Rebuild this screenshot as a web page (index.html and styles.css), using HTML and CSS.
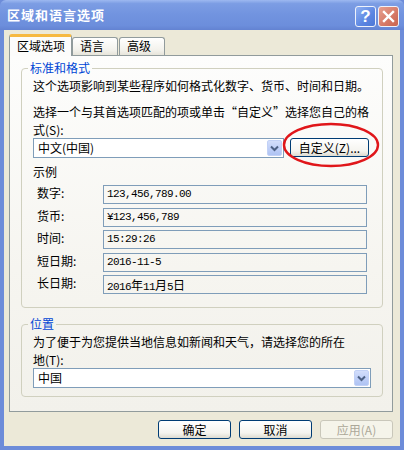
FILE: index.html
```html
<!DOCTYPE html>
<html lang="zh-CN">
<head>
<meta charset="utf-8">
<title>区域和语言选项</title>
<link rel="stylesheet" href="styles.css">
</head>
<body>
<div class="window">
  <div class="titlebar">
    <span class="title">区域和语言选项</span>
    <div class="tb-buttons">
      <span class="tb-btn help">?</span>
      <span class="tb-btn close"><svg width="13" height="13" viewBox="0 0 13 13"><path d="M2 2 L11 11 M11 2 L2 11" stroke="#fff" stroke-width="2.4" stroke-linecap="square"/></svg></span>
    </div>
  </div>
  <div class="client">
    <div class="tabs">
      <div class="tab active">区域选项</div>
      <div class="tab">语言</div>
      <div class="tab t3">高级</div>
    </div>
    <div class="panel">
      <fieldset class="group g1">
        <legend>标准和格式</legend>
        <div class="gbody">
          <p class="line1">这个选项影响到某些程序如何格式化数字、货币、时间和日期。</p>
          <p class="line2">选择一个与其首选项匹配的项或单击“自定义”选择您自己的格<br>式(S):</p>
          <div class="fmt-row">
            <div class="select short">
              <span class="val">中文(中国)</span>
              <span class="arrow"><svg width="9" height="7" viewBox="0 0 9 7"><path d="M1 1.5 L4.5 5 L8 1.5" fill="none" stroke="#4d6185" stroke-width="2"/></svg></span>
            </div>
            <button class="btn custom">自定义(Z)...</button>
          </div>
          <div class="sample-title">示例</div>
          <div class="examples">
            <div class="ex-row"><span class="ex-label">数字:</span><span class="ex-box">123,456,789.00</span></div>
            <div class="ex-row"><span class="ex-label">货币:</span><span class="ex-box">¥123,456,789</span></div>
            <div class="ex-row"><span class="ex-label">时间:</span><span class="ex-box">15:29:26</span></div>
            <div class="ex-row"><span class="ex-label">短日期:</span><span class="ex-box">2016-11-5</span></div>
            <div class="ex-row"><span class="ex-label">长日期:</span><span class="ex-box">2016<span class="cjk">年</span>11<span class="cjk">月</span>5<span class="cjk">日</span></span></div>
          </div>
        </div>
      </fieldset>
      <fieldset class="group g2">
        <legend>位置</legend>
        <div class="gbody">
          <p class="line3">为了便于为您提供当地信息如新闻和天气，请选择您的所在<br>地(T):</p>
          <div class="select full">
            <span class="val">中国</span>
            <span class="arrow"><svg width="9" height="7" viewBox="0 0 9 7"><path d="M1 1.5 L4.5 5 L8 1.5" fill="none" stroke="#4d6185" stroke-width="2"/></svg></span>
          </div>
        </div>
      </fieldset>
    </div>
    <div class="buttons">
      <button class="btn dlg">确定</button>
      <button class="btn dlg">取消</button>
      <button class="btn dlg disabled">应用(A)</button>
    </div>
  </div>
  <svg class="mark" width="100" height="48" viewBox="0 0 100 48"><ellipse cx="49" cy="23" rx="47" ry="21" fill="none" stroke="#e0161a" stroke-width="2.4"/></svg>
</div>
</body>
</html>
```
FILE: styles.css
```css
* { box-sizing: border-box; }
html, body { margin: 0; padding: 0; }
body {
  width: 404px;
  height: 450px;
  overflow: hidden;
  font-family: "Noto Sans CJK SC", "Noto Sans", sans-serif;
  font-size: 12px;
  color: #000;
  background: #6b8bd8;
}
p { margin: 0; }

.window {
  position: relative;
  width: 404px;
  height: 450px;
  display: flex;
  flex-direction: column;
  background: #6d8cd9;
}

.titlebar {
  height: 30px;
  flex: none;
  display: flex;
  align-items: center;
  justify-content: space-between;
  padding: 0 5px 0 7px;
  background: linear-gradient(#9db8f0 0%, #7c9de4 12%, #7193df 50%, #6c8edc 85%, #6383d2 100%);
  border-radius: 6px 6px 0 0;
}
.title {
  color: #fff;
  font-weight: bold;
  font-size: 13px;
  letter-spacing: 1px;
  line-height: 16px;
}
.tb-buttons { display: flex; gap: 2px; margin-top: 3px; }
.tb-btn {
  width: 21px;
  height: 21px;
  border: 1px solid #eef2fb;
  border-radius: 3px;
  display: flex;
  align-items: center;
  justify-content: center;
  color: #fff;
  font-family: "Liberation Sans", sans-serif;
  font-weight: bold;
  font-size: 17px;
}
.help { background: linear-gradient(135deg, #8fb0f2, #5b86e2 60%, #4d77d6); }
.close { background: linear-gradient(135deg, #e7a08f, #d57866 60%, #c8634f); }

.client {
  flex: 1;
  margin: 0 4px 4px;
  background: #ece9d8;
  padding: 4px 7px 0 5px;
  display: flex;
  flex-direction: column;
}

.tabs {
  display: flex;
  align-items: flex-end;
  height: 21px;
  position: relative;
  z-index: 1;
}
.tab {
  height: 18px;
  border: 1px solid #919b9c;
  border-bottom: none;
  border-radius: 3px 3px 0 0;
  background: linear-gradient(#ffffff, #f3f2ec 70%, #e6e4da);
  line-height: 16px;
  padding-left: 7px;
  width: 46px;
}
.tab.active {
  width: 63px;
  height: 22px;
  margin-bottom: -1px;
  border-top: 3px solid #f6b941;
  background: #fcfcfb;
  padding-left: 7px;
  line-height: 18px;
  font-size: 12px;
}
.tab.t3 { margin-left: 1px; }

.panel {
  border: 1px solid #919b9c;
  background: linear-gradient(#fdfdfc, #f6f5f0 60%, #f2f1eb);
  padding: 5px 9px 14px 11px;
}

.group {
  margin: 0;
  padding: 0;
  border: 1px solid #d0d0bf;
  border-radius: 4px;
  min-width: 0;
}
.group legend {
  margin-left: 6px;
  padding: 0 2px;
  color: #0046d5;
  line-height: 14px;
  font-size: 12px;
}
.g2 { margin-top: 9px; }

.gbody { padding: 3px 11px 13px 11px; }
.g2 .gbody { padding: 2px 11px 8px 11px; }

.line1 { line-height: 15px; }
.line2 { line-height: 17.5px; margin-top: 10px; }
.line3 { line-height: 17.5px; }

.fmt-row { display: flex; gap: 6px; margin-top: 0; }

.select {
  display: flex;
  height: 20px;
  border: 1px solid #7f9db9;
  background: #fff;
}
.select.short { width: 251px; }
.select.full { margin-top: 0; }
.select .val { flex: 1; padding-left: 4px; line-height: 18px; }
.select .arrow {
  width: 15px;
  margin: 1px;
  border-radius: 2px;
  background: linear-gradient(#d3defb, #bccdf7 60%, #aec3f3);
  border: 1px solid #c2d1f6;
  display: flex;
  align-items: center;
  justify-content: center;
}

.btn {
  font-family: "Noto Sans CJK SC", sans-serif;
  font-size: 12px;
  color: #000;
  border: 1px solid #003c74;
  border-radius: 3px;
  background: linear-gradient(#ffffff, #f5f4ef 70%, #dedbd0);
  padding: 0;
  margin: 0;
}
.btn.custom { width: 79px; height: 19px; line-height: 16px; }

.sample-title { margin-top: 7px; line-height: 14px; }

.examples {
  margin-top: 6px;
  display: flex;
  flex-direction: column;
  gap: 3.5px;
}
.ex-row { display: flex; height: 19px; }
.ex-label { width: 70px; padding-left: 4px; line-height: 15px; }
.ex-box {
  width: 264px;
  height: 19px;
  border: 1px solid #7f9db9;
  padding-left: 3px;
  font-family: "Liberation Mono", "Noto Sans CJK SC", monospace;
  font-size: 11px;
  letter-spacing: -0.6px;
  line-height: 17px;
}
.ex-box .cjk { font-family: "Noto Sans CJK SC", sans-serif; font-size: 12px; letter-spacing: 0; }

.buttons {
  display: flex;
  justify-content: flex-end;
  gap: 8px;
  margin-top: 8px;
}
.btn.dlg { width: 73px; height: 19px; line-height: 16px; }
.btn.disabled {
  border-color: #c9c7ba;
  color: #aca899;
  background: #f5f4ea;
}

.mark {
  position: absolute;
  left: 282px;
  top: 122px;
}
```
